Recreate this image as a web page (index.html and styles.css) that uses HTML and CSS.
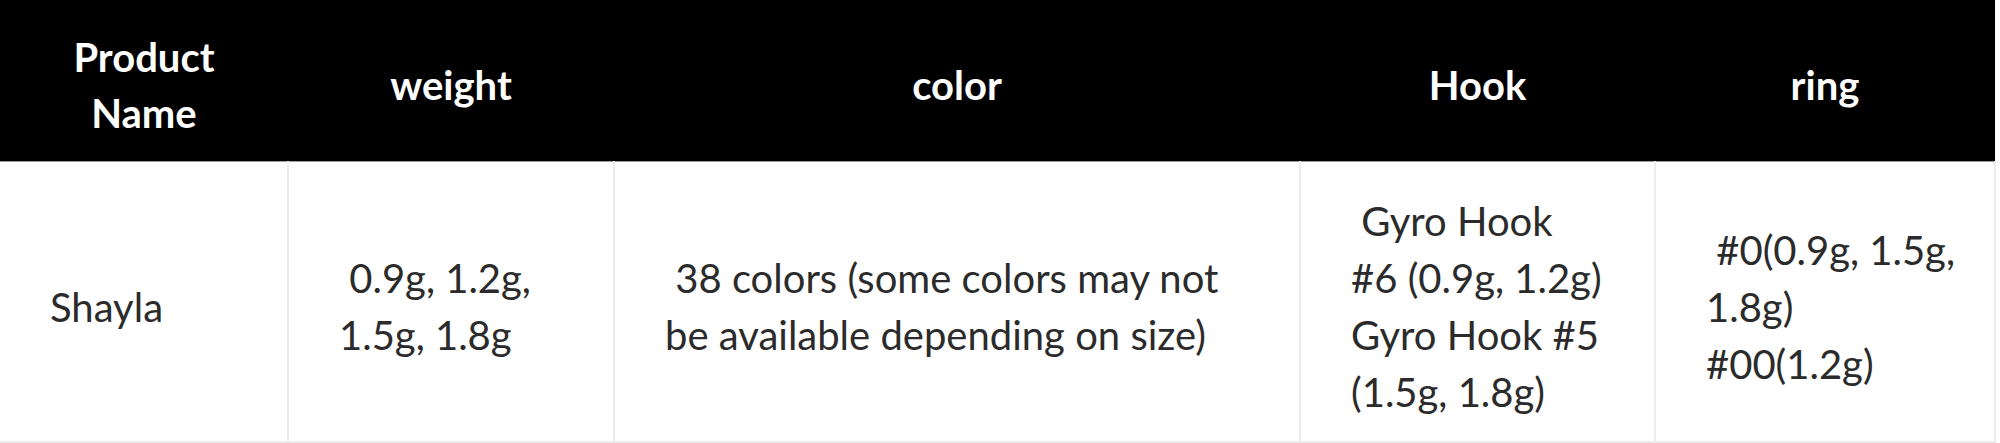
FILE: index.html
```html
<!DOCTYPE html>
<html lang="en">
<head>
<meta charset="utf-8">
<title>Product spec</title>
<link rel="stylesheet" href="styles.css">
</head>
<body>
<table class="spec">
  <colgroup>
    <col class="c-name">
    <col class="c-weight">
    <col class="c-color">
    <col class="c-hook">
    <col class="c-ring">
  </colgroup>
  <thead>
    <tr>
      <th>Product<br>Name</th>
      <th>weight</th>
      <th>color</th>
      <th>Hook</th>
      <th>ring</th>
    </tr>
  </thead>
  <tbody>
    <tr>
      <td>Shayla</td>
      <td>&nbsp;0.9g, 1.2g,<br>1.5g, 1.8g</td>
      <td>&nbsp;38 colors (some colors may not<br>be available depending on size)</td>
      <td>&nbsp;Gyro Hook<br>#6 (0.9g, 1.2g)<br>Gyro Hook #5<br>(1.5g, 1.8g)</td>
      <td>&nbsp;#0(0.9g, 1.5g,<br>1.8g)<br>#00(1.2g)</td>
    </tr>
  </tbody>
</table>
</body>
</html>
```
FILE: styles.css
```css
html, body {
  margin: 0;
  padding: 0;
  background: #fff;
}

.spec {
  width: 1995px;
  border-collapse: collapse;
  table-layout: fixed;
  font-family: Lato, "Open Sans", sans-serif;
  font-size: 40px;
}

.c-name { width: 288px; }
.c-weight { width: 326px; }
.c-color { width: 686px; }
.c-hook { width: 355px; }
.c-ring { width: 340px; }

.spec th {
  height: 161px;
  box-sizing: border-box;
  padding: 10px 16px 0;
  background: #000;
  color: #fff;
  font-weight: 700;
  line-height: 56px;
  text-align: center;
  vertical-align: middle;
  border-bottom: 1px solid #9a9a9a;
}

.spec td {
  height: 281px;
  box-sizing: border-box;
  padding: 12px 20px 0 50px;
  color: #2b2b2b;
  line-height: 57px;
  text-align: left;
  vertical-align: middle;
  white-space: nowrap;
  border-left: 2px solid #ececec;
  border-right: 2px solid #ececec;
  border-bottom: 2px solid #ececec;
}

.spec td:first-child {
  border-left: none;
}
```
